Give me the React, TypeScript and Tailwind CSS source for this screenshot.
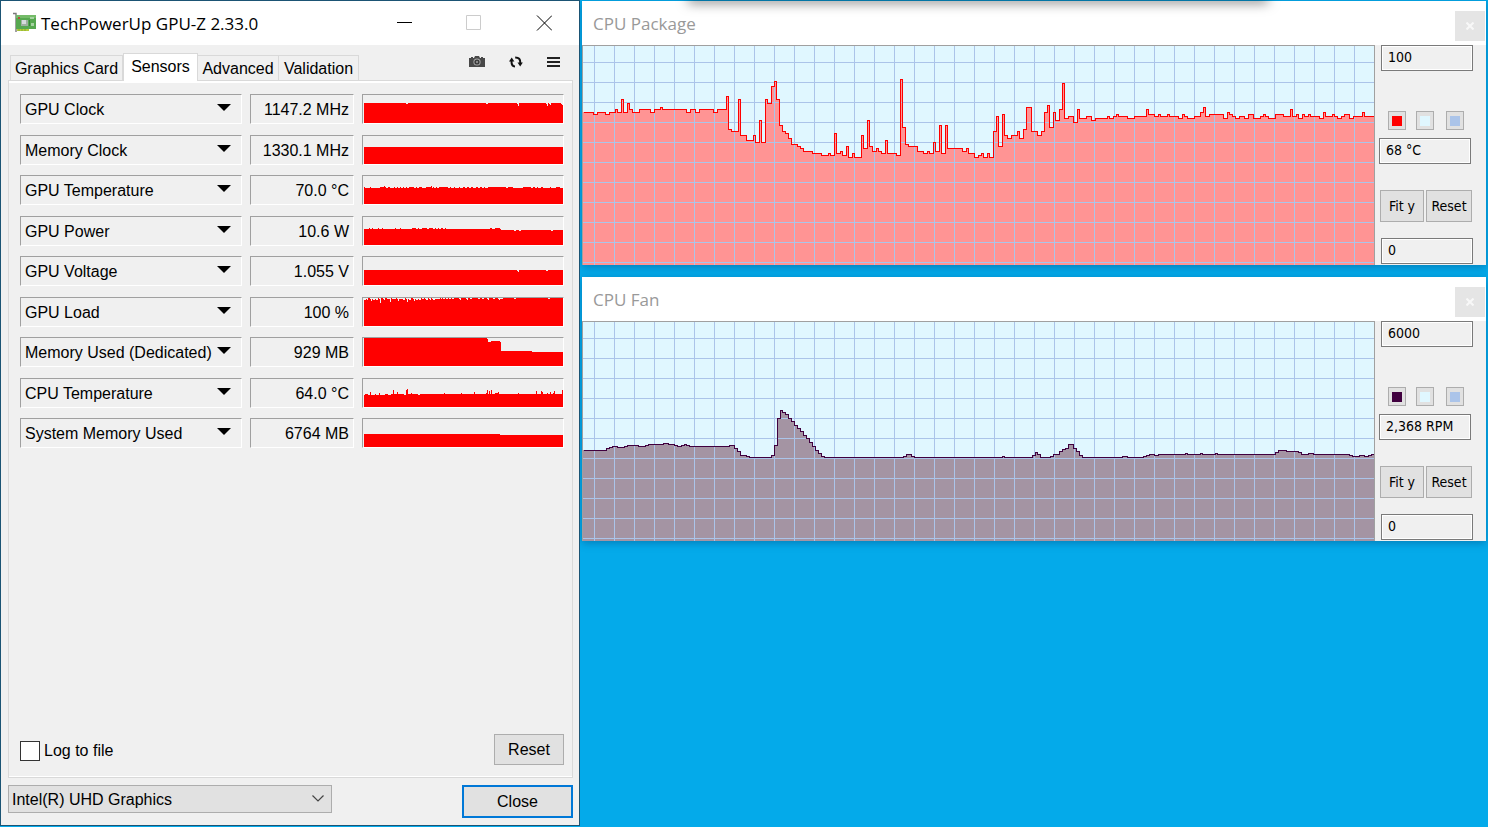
import type { ReactNode } from "react";

type Step = [number, number];

// "x,y x,y" -> every pair starts a level that holds until the next one
const parseSteps = (source: string): Step[] => source.split(" ").map((pair) => pair.split(",").map(Number) as Step);

const stepPath = (steps: Step[], end: number, shift = 0) =>
    steps.map(([x, y], i) => `${i === 0 ? "M" : "H"}${x + shift}${i === 0 ? " " : "V"}${y + shift}`).join("") + `H${end}`;

const sensors = [
    {
        name: "GPU Clock",
        value: "1147.2 MHz",
        history: "0,8 42,9 44,8 122,9 124,8 153,9 154,11 155,8 182,9 183,11 184,8 185,9 186,10 187,8 197,9 198,10",
    },
    { name: "Memory Clock", value: "1330.1 MHz", history: "0,11" },
    {
        name: "GPU Temperature",
        value: "70.0 °C",
        history:
            "0,11 1,12 6,11 7,12 16,11 20,10 21,11 22,12 24,11 26,12 30,11 31,12 33,11 34,12 36,11 37,12 39,11 40,12 42,11 43,12 45,11 50,12 52,11 53,12 55,11 58,12 62,11 67,10 68,12 69,11 70,12 72,11 73,12 75,11 84,12 86,11 87,12 90,11 91,12 95,11 96,12 99,11 101,12 103,11 105,12 107,11 109,12 112,11 114,12 116,11 118,12 120,11 121,12 124,11 142,12 144,11 149,12 159,11 167,12 169,11 171,12 173,11 174,12 177,11 179,12 186,11 187,12 192,11 196,12",
    },
    {
        name: "GPU Power",
        value: "10.6 W",
        history:
            "0,12 5,11 6,12 8,11 9,12 14,11 15,12 18,11 19,12 31,11 32,12 36,11 37,12 48,11 52,12 54,11 55,12 58,11 63,12 65,11 69,12 71,11 72,12 74,11 75,12 77,11 79,12 81,11 82,12 126,11 128,12 131,11 136,12 137,13 150,14 152,13 155,14 157,13 187,14 189,13",
    },
    { name: "GPU Voltage", value: "1.055 V", history: "0,13 153,14 154,15 155,13 182,14 184,13" },
    {
        name: "GPU Load",
        value: "100 %",
        history:
            "0,2 2,1 3,2 4,0 6,1 7,3 8,1 9,2 11,1 12,2 14,0 15,1 16,5 17,0 19,1 20,2 21,0 23,1 26,4 27,0 28,1 32,0 33,1 34,3 35,1 39,2 41,0 42,1 43,4 44,1 45,2 47,0 49,1 50,3 51,1 52,2 54,1 55,2 57,0 58,1 60,0 61,1 62,2 64,0 65,1 66,2 67,0 68,1 69,2 71,1 76,0 77,1 78,0 79,1 81,0 82,1 84,0 85,1 87,0 88,1 90,0 95,1 96,2 97,0 102,1 103,2 104,0 106,1 108,0 114,1 116,0 118,1 120,0 123,1 124,2 125,0 129,1 131,0 134,1 135,2 136,1 139,0 150,1 152,0 184,1 186,0",
    },
    { name: "Memory Used (Dedicated)", value: "929 MB", history: "0,0 123,1 124,4 127,3 136,4 137,13 168,14" },
    {
        name: "CPU Temperature",
        value: "64.0 °C",
        history:
            "0,16 1,15 4,16 6,13 7,16 11,15 12,16 15,14 16,16 21,15 24,16 27,15 29,11 30,15 33,13 34,15 40,16 42,11 43,10 44,15 47,14 48,15 54,16 56,15 80,14 81,15 97,14 98,15 110,13 111,15 122,14 123,11 124,15 125,12 126,15 127,11 128,15 131,14 134,13 135,15 154,14 155,15 172,12 173,15 177,12 178,13 179,15 183,14 184,15 186,13 187,15 189,14 190,12 191,15 198,11",
    },
    { name: "System Memory Used", value: "6764 MB", history: "0,15 136,16" },
];

const packageHistory =
    "583,112 593,114 597,112 605,114 609,112 615,109 617,112 621,99 623,112 627,103 629,109 632,112 639,109 650,112 654,109 660,107 662,109 686,112 690,109 695,112 699,109 713,112 717,109 726,96 728,129 731,131 738,99 740,135 746,140 753,135 755,142 759,120 761,142 765,99 767,103 771,86 774,81 776,99 779,125 782,131 785,133 788,138 791,144 797,146 800,148 803,151 812,153 821,155 828,153 830,155 834,133 836,153 840,151 842,155 846,146 848,157 852,153 854,157 861,135 863,148 867,120 869,146 872,151 876,148 878,151 881,153 885,140 887,153 896,155 900,79 902,127 905,144 908,146 917,151 923,153 927,151 929,153 933,142 935,151 939,125 941,153 945,125 947,148 962,151 966,148 968,153 974,157 978,155 981,153 983,157 987,153 989,157 993,131 996,116 998,146 1002,114 1004,135 1007,138 1011,135 1017,131 1019,138 1023,129 1026,107 1031,131 1037,135 1041,131 1044,112 1047,105 1049,127 1053,112 1055,120 1059,109 1062,83 1064,118 1068,116 1073,122 1077,109 1079,118 1086,116 1091,120 1095,118 1107,116 1109,118 1113,116 1116,114 1118,116 1127,118 1134,116 1146,109 1148,114 1154,116 1158,114 1160,116 1167,114 1169,116 1178,118 1182,114 1184,116 1187,118 1194,116 1200,112 1203,107 1205,116 1209,114 1223,118 1227,112 1229,114 1232,116 1235,118 1239,116 1244,118 1248,114 1253,118 1260,116 1263,114 1265,116 1268,118 1275,114 1283,116 1290,109 1292,116 1296,114 1298,118 1302,114 1304,116 1308,114 1310,116 1319,118 1323,112 1325,116 1332,114 1334,116 1337,118 1341,116 1344,114 1349,118 1353,116 1362,112 1364,116";

const fanHistory =
    "583,174 606,172 609,171 612,170 617,171 624,170 627,169 638,170 645,169 648,168 663,167 668,168 674,169 677,170 681,169 684,168 686,169 689,170 729,169 734,172 737,175 740,179 746,180 749,181 771,179 774,169 777,142 780,134 782,136 785,138 788,142 791,145 794,149 797,152 800,155 803,159 806,162 809,166 812,170 815,174 818,177 821,180 824,181 903,180 906,178 911,180 914,181 1002,180 1004,181 1032,179 1035,176 1037,178 1040,181 1050,180 1053,178 1059,175 1062,173 1065,172 1068,168 1073,172 1076,175 1079,179 1082,181 1122,180 1127,181 1143,180 1146,179 1149,178 1154,179 1158,178 1185,177 1187,178 1200,177 1202,178 1215,177 1217,178 1275,176 1278,174 1286,175 1298,176 1301,178 1308,177 1313,178 1349,179 1352,180 1359,179 1364,180 1368,179 1371,178";

const gridColumns = Array.from({ length: 39 }, (_, i) => 594 + i * 20);
const gridRows = Array.from({ length: 11 }, (_, i) => 62 + i * 20);

const CardIcon = () => (
    <svg width="24" height="22" viewBox="0 0 24 22" aria-hidden="true">
        <path d="M0 1.5h3V20" fill="none" stroke="#7a7a7a" strokeWidth="1.4" />
        <path d="M3 3h20v14H3z" fill="#56a850" />
        <path d="M3 3h20v3H3z" fill="#74bb68" />
        <path d="M4 17h12v2H4z" fill="#b4cc3c" />
        <path d="M6 17v2M9 17v2M12 17v2" stroke="#7ca52a" strokeWidth="0.8" />
        <path d="M8 8h7v6H8z" fill="#9fb0a0" />
        <path d="M9 8h4v4H9z" fill="#d6dbdc" />
        <path d="M17 5h4v2h-4zM18 11h3v3h-3z" fill="#a6d2a2" />
        <path d="M5 5h2v2H5z" fill="#b54e3d" />
        <path d="M16 8h1v6h-1z" fill="#37823a" />
    </svg>
);

const CameraIcon = () => (
    <svg width="16" height="12" viewBox="0 0 16 12" aria-hidden="true">
        <path d="M0 2h2V1h2v1h1l1-2h4l1 2h1V1h2v1h2v9H0z" fill="#484848" />
        <circle cx="8" cy="6" r="3.6" fill="#a9a9a9" />
        <circle cx="8" cy="6" r="2.6" fill="#383838" />
        <circle cx="8" cy="6" r="1.2" fill="#8b8b8b" />
    </svg>
);

const RefreshIcon = () => (
    <svg width="14" height="12" viewBox="0 0 14 12" aria-hidden="true">
        <path d="M6 10.6C3.5 10.4 2.4 8.6 2.5 5" fill="none" stroke="#111" strokeWidth="2" />
        <path d="M0 5.4 2.7 1.5 5.4 5.4z" fill="#111" />
        <path d="M6.2 1.4C10 1.4 11.4 3.2 11.3 7" fill="none" stroke="#111" strokeWidth="2" />
        <path d="M8.5 6.6 11.2 10.5 13.8 6.6z" fill="#111" />
    </svg>
);

const CaptionButton = ({ label, children }: { label: string; children: ReactNode }) => (
    <button aria-label={label} className="flex h-full w-[70px] items-center justify-center">
        <svg width="16" height="16" viewBox="0 0 16 16" fill="none" stroke="black">
            {children}
        </svg>
    </button>
);

const sunken = "border border-t-[#a0a0a0] border-l-[#a0a0a0] border-r-white border-b-white";

const SensorRow = ({ name, value, history }: { name: string; value: string; history: string }) => (
    <div className="mb-[10px] flex h-[30px] gap-2 odd:mb-[11px]">
        <div className="relative w-[222px]">
            <select aria-label={name} className={`h-full w-full appearance-none bg-transparent pt-[2px] pl-1 ${sunken}`}>
                <option>{name}</option>
            </select>
            <svg className="pointer-events-none absolute top-[10px] right-[11px]" width="14" height="7" viewBox="0 0 14 7">
                <path d="M0 0h14L7 7z" fill="black" />
            </svg>
        </div>
        <output className={`w-[104px] pr-1 text-right leading-[30px] ${sunken}`}>{value}</output>
        <div className={`flex-1 pl-px ${sunken}`}>
            <svg className="block h-full w-full" viewBox="0 0 199 28" preserveAspectRatio="none" shapeRendering="crispEdges">
                <path d={`${stepPath(parseSteps(history), 199)}V28H0Z`} fill="red" />
            </svg>
        </div>
    </div>
);

const tabs = [
    { label: "Graphics Card", width: "w-[113px]" },
    { label: "Sensors", width: "w-[75px]" },
    { label: "Advanced", width: "w-[81px]" },
    { label: "Validation", width: "w-[80px]" },
];

const GpuWindow = () => (
    <section className="relative z-10 flex w-[580px] shrink-0 flex-col border border-[#1b5474] bg-[#f0f0f0] font-['Liberation_Sans',Arial,sans-serif] text-base text-black">
        <header className="flex h-11 shrink-0 items-center bg-white pl-3">
            <CardIcon />
            <h1 className="flex-1 pt-[2px] pl-1 font-['Open_Sans','Noto_Sans',sans-serif] text-[17px] whitespace-nowrap">
                TechPowerUp GPU-Z 2.33.0
            </h1>
            <CaptionButton label="Minimize">
                <path d="M1 7.5h15" />
            </CaptionButton>
            <CaptionButton label="Maximize">
                <path d="M0.5 0.5h14v14h-14z" stroke="#ccc" />
            </CaptionButton>
            <CaptionButton label="Close window">
                <path d="M1 0.5l15 15M16 0.5l-15 15" />
            </CaptionButton>
        </header>

        <div className="flex h-[35px] shrink-0 items-end justify-between pr-[19px] pl-[9px]">
            <nav className="relative flex items-end" role="tablist">
                {tabs.map(({ label, width }) =>
                    label === "Sensors" ? (
                        <button key={label} role="tab" aria-selected className={`${width} -mb-px h-7 border border-b-0 border-[#d9d9d9] bg-white pb-px`}>
                            {label}
                        </button>
                    ) : (
                        <button key={label} role="tab" className={`${width} h-[25px] border border-b-0 border-l-0 border-[#d9d9d9] pt-px first:border-l`}>
                            {label}
                        </button>
                    )
                )}
            </nav>
            <div className="flex items-center gap-6 pb-3">
                <button aria-label="Screenshot">
                    <CameraIcon />
                </button>
                <button aria-label="Refresh">
                    <RefreshIcon />
                </button>
                <button aria-label="Menu">
                    <svg width="13" height="11" viewBox="0 0 13 11" fill="#222">
                        <path d="M0 0h13v2H0zM0 4h13v2H0zM0 8h13v2H0z" />
                    </svg>
                </button>
            </div>
        </div>

        <div className="mr-[6px] ml-[7px] flex flex-1 flex-col border border-[#d9d9d9]">
            <div className="flex flex-1 flex-col border-t-2 border-b border-white pt-[11px] pr-2 pb-[11px] pl-[11px]">
                {sensors.map((sensor) => (
                    <SensorRow key={sensor.name} {...sensor} />
                ))}
                <div className="mt-auto flex items-end justify-between">
                    <label className="flex items-center gap-1 pb-[2px]">
                        <input type="checkbox" className="h-5 w-5 appearance-none border border-[#333] bg-white" />
                        Log to file
                    </label>
                    <button className="h-[31px] w-[70px] border border-[#adadad] bg-[#e1e1e1]">Reset</button>
                </div>
            </div>
        </div>

        <footer className="flex items-start justify-between pt-[7px] pr-[6px] pb-[7px] pl-[7px]">
            <div className="relative w-[324px]">
                <select aria-label="Graphics device" className="h-7 w-full appearance-none border border-[#adadad] bg-[#e1e1e1] pt-[2px] pl-[3px]">
                    <option>Intel(R) UHD Graphics</option>
                </select>
                <svg className="pointer-events-none absolute top-[10px] right-2" width="12" height="7" viewBox="0 0 12 7" fill="none" stroke="#444">
                    <path d="M0.5 0.5 6 6l5.5-5.5" strokeWidth="1.2" />
                </svg>
            </div>
            <button className="h-[33px] w-[111px] border-2 border-[#0078d7] bg-[#e1e1e1]">Close</button>
        </footer>
    </section>
);

type GraphWindowProps = {
    title: string;
    max: string;
    current: string;
    history: string;
    line: string;
    fill: string;
};

const fieldClass = "h-[26px] w-[92px] border border-[#7a7a7a] bg-[#f0f0f0] pb-[2px] pl-[6px] outline outline-1 -outline-offset-2 outline-white";
const buttonClass = "h-8 border border-[#adadad] bg-[#e1e1e1]";

const GraphWindow = ({ title, max, current, history, line, fill }: GraphWindowProps) => {
    const steps = parseSteps(history);

    return (
        <section className="bg-[#f0f0f0] font-['DejaVu_Sans_Condensed','DejaVu_Sans',sans-serif] text-sm text-black shadow-[0_2px_8px_rgba(0,60,110,0.4)]">
            <header className="flex h-11 items-center justify-between bg-white pr-px pl-[11px]">
                <h2 className="pt-[2px] font-['Open_Sans','Noto_Sans',sans-serif] text-[17px] text-[#999]">{title}</h2>
                <button aria-label={`Close ${title}`} className="mt-[6px] flex h-[30px] w-[30px] items-center justify-center bg-[#e5e5e5]">
                    <svg width="8" height="8" viewBox="0 0 8 8" stroke="#f8f8f8" strokeWidth="2">
                        <path d="M0.5 0.5l7 7M7.5 0.5l-7 7" />
                    </svg>
                </button>
            </header>
            <div className="flex">
                <div className="h-[220px] flex-1 border border-b-0 border-[#a0a0a0]">
                    <svg className="block h-full w-full bg-[#e0f7ff]" viewBox="583 46 791 219" preserveAspectRatio="none" shapeRendering="crispEdges">
                        <path d={`${stepPath(steps, 1374)}V265H583Z`} fill={fill} />
                        {gridColumns.map((x) => (
                            <rect key={x} x={x} y="46" width="1" height="219" fill="#abc4e9" />
                        ))}
                        {gridRows.map((y) => (
                            <rect key={y} x="583" y={y} width="791" height="1" fill="#abc4e9" />
                        ))}
                        <path d={stepPath(steps, 1374, 0.5)} fill="none" stroke={line} />
                    </svg>
                </div>
                <div className="flex w-[111px] flex-col items-start pl-[5px]">
                    <input aria-label={`${title} maximum`} defaultValue={max} className={`${fieldClass} ml-px`} />
                    <div className="mt-10 ml-2 flex gap-[10px]">
                        <button aria-label="Line colour" className="h-[19px] w-[18px] border border-[#adadad] bg-[#e1e1e1] p-[3px]">
                            <span className="block h-[10px] w-[10px]" style={{ backgroundColor: line }} />
                        </button>
                        <button aria-label="Background colour" className="h-[19px] w-[18px] border border-[#adadad] bg-[#e1e1e1] p-[3px]">
                            <span className="block h-[10px] w-[10px] bg-[#e0f7ff]" />
                        </button>
                        <button aria-label="Grid colour" className="ml-[2px] h-[19px] w-[18px] border border-[#adadad] bg-[#e1e1e1] p-[3px]">
                            <span className="block h-[10px] w-[10px] bg-[#abc4e9]" />
                        </button>
                    </div>
                    <input aria-label={`${title} value`} readOnly value={current} className={`${fieldClass} mt-2 -ml-px`} />
                    <div className="mt-[26px] flex gap-[2px]">
                        <button className={`${buttonClass} w-11`}>Fit y</button>
                        <button className={`${buttonClass} w-[46px]`}>Reset</button>
                    </div>
                    <input aria-label={`${title} minimum`} defaultValue="0" className={`${fieldClass} mt-4 ml-px`} />
                </div>
            </div>
        </section>
    );
};

export default function App() {
    return (
        <main className="flex min-h-screen overflow-hidden bg-[#04aaea] pb-px">
            <GpuWindow />
            <div className="relative flex min-w-0 flex-1 flex-col gap-3 pt-px pr-[2px] pl-[2px]">
                <GraphWindow title="CPU Package" max="100" current="68 °C" history={packageHistory} line="#ff0000" fill="#ff9494" />
                <GraphWindow title="CPU Fan" max="6000" current="2,368 RPM" history={fanHistory} line="#40003f" fill="#a494a3" />
                {/* shadow of a window docked above the desktop */}
                <div className="absolute -top-2 right-[220px] left-[108px] h-2 shadow-[0_3px_12px_rgba(0,0,0,0.5)]" />
            </div>
        </main>
    );
}
